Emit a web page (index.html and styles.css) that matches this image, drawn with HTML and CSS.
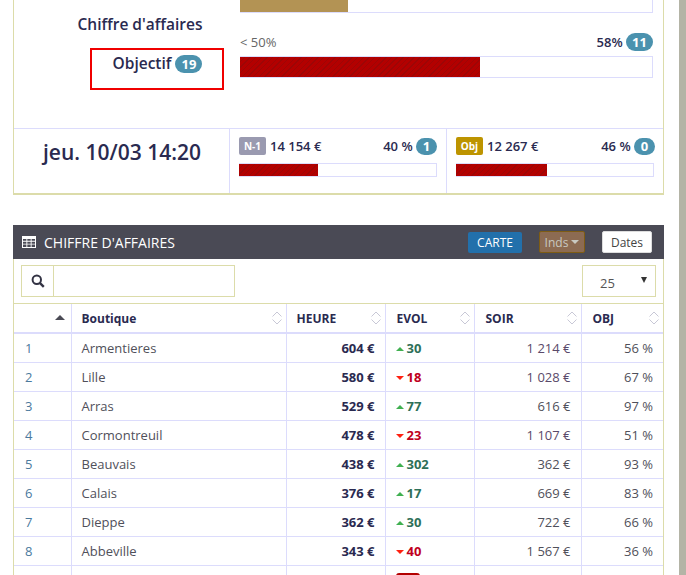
FILE: index.html
```html
<!DOCTYPE html>
<html lang="fr">
<head>
<meta charset="utf-8">
<title>Chiffre d'affaires</title>
<link rel="stylesheet" href="styles.css">
</head>
<body>
<main class="page">
  <section class="panel">
    <div class="top">
      <div class="labels">
        <div class="label-title">Chiffre d'affaires</div>
        <div class="label-box"><span>Objectif</span> <span class="badge">19</span></div>
      </div>
      <div class="bars">
        <div class="track track-first"><div class="fill fill-gold" style="width:108px"></div></div>
        <div class="bar-head"><span class="muted">&lt; 50%</span><span class="strong">58% <span class="badge">11</span></span></div>
        <div class="track track-main"><div class="fill hatch" style="width:240px"></div></div>
      </div>
    </div>
    <div class="bottom">
      <div class="date">jeu. 10/03 14:20</div>
      <div class="cell">
        <div class="cell-head"><span class="tag tag-n1">N-1</span><span class="amount">14 154 €</span><span class="pct">40 % <span class="badge badge-round">1</span></span></div>
        <div class="track track-small"><div class="fill hatch" style="width:79px"></div></div>
      </div>
      <div class="cell cell-last">
        <div class="cell-head"><span class="tag tag-obj">Obj</span><span class="amount">12 267 €</span><span class="pct">46 % <span class="badge badge-round">0</span></span></div>
        <div class="track track-small"><div class="fill hatch" style="width:91px"></div></div>
      </div>
    </div>
  </section>

  <section class="card">
    <header class="card-head">
      <svg class="table-icon" width="14" height="12" viewBox="0 0 14 12"><path fill="#fff" d="M0 0h14v12H0z"/><path fill="#4a4a55" d="M1 3h3.4v1.8H1zM5.3 3h3.4v1.8H5.3zM9.6 3H13v1.8H9.6zM1 5.7h3.4v2H1zM5.3 5.7h3.4v2H5.3zM9.6 5.7H13v2H9.6zM1 8.6h3.4V11H1zM5.3 8.6h3.4V11H5.3zM9.6 8.6H13V11H9.6z"/></svg>
      <span class="card-title">CHIFFRE D'AFFAIRES</span>
      <span class="btn btn-blue">CARTE</span>
      <span class="btn btn-brown">Inds<i class="caret"></i></span>
      <span class="btn btn-white">Dates</span>
    </header>
    <div class="tools">
      <div class="search">
        <span class="search-icon"><svg width="14" height="14" viewBox="0 0 14 14"><circle cx="5.8" cy="5.8" r="4.2" fill="none" stroke="#333344" stroke-width="2"/><path d="M8.8 8.8l4 4" stroke="#333344" stroke-width="2.4" fill="none"/></svg></span>
        <span class="search-input"></span>
      </div>
      <div class="select"><span>25</span><i class="select-arrow"></i></div>
    </div>
    <table class="grid">
      <colgroup><col class="c1"><col class="c2"><col class="c3"><col class="c4"><col class="c5"><col class="c6"></colgroup>
      <thead>
        <tr>
          <th class="sorted"><i class="sort-up"></i></th>
          <th>Boutique<svg class="sort" width="10" height="14" viewBox="0 0 10 14"><path d="M.5 5.5L5 1l4.5 4.5M.5 8.5L5 13l4.5-4.5" fill="none" stroke="#c8c8d6"/></svg></th>
          <th>HEURE<svg class="sort" width="10" height="14" viewBox="0 0 10 14"><path d="M.5 5.5L5 1l4.5 4.5M.5 8.5L5 13l4.5-4.5" fill="none" stroke="#c8c8d6"/></svg></th>
          <th class="th-shift">EVOL<svg class="sort" width="10" height="14" viewBox="0 0 10 14"><path d="M.5 5.5L5 1l4.5 4.5M.5 8.5L5 13l4.5-4.5" fill="none" stroke="#c8c8d6"/></svg></th>
          <th class="th-shift">SOIR<svg class="sort" width="10" height="14" viewBox="0 0 10 14"><path d="M.5 5.5L5 1l4.5 4.5M.5 8.5L5 13l4.5-4.5" fill="none" stroke="#c8c8d6"/></svg></th>
          <th class="th-shift">OBJ<svg class="sort" width="10" height="14" viewBox="0 0 10 14"><path d="M.5 5.5L5 1l4.5 4.5M.5 8.5L5 13l4.5-4.5" fill="none" stroke="#c8c8d6"/></svg></th>
        </tr>
      </thead>
      <tbody>
        <tr><td class="rank">1</td><td>Armentieres</td><td class="num strong">604 €</td><td class="evol up"><i></i>30</td><td class="num soir-big">1 214 €</td><td class="num">56 %</td></tr>
        <tr><td class="rank">2</td><td>Lille</td><td class="num strong">580 €</td><td class="evol down"><i></i>18</td><td class="num soir-big">1 028 €</td><td class="num">67 %</td></tr>
        <tr><td class="rank">3</td><td>Arras</td><td class="num strong">529 €</td><td class="evol up"><i></i>77</td><td class="num">616 €</td><td class="num">97 %</td></tr>
        <tr><td class="rank">4</td><td>Cormontreuil</td><td class="num strong">478 €</td><td class="evol down"><i></i>23</td><td class="num soir-big">1 107 €</td><td class="num">51 %</td></tr>
        <tr><td class="rank">5</td><td>Beauvais</td><td class="num strong">438 €</td><td class="evol up"><i></i>302</td><td class="num">362 €</td><td class="num">93 %</td></tr>
        <tr><td class="rank">6</td><td>Calais</td><td class="num strong">376 €</td><td class="evol up"><i></i>17</td><td class="num">669 €</td><td class="num">83 %</td></tr>
        <tr><td class="rank">7</td><td>Dieppe</td><td class="num strong">362 €</td><td class="evol up"><i></i>30</td><td class="num">722 €</td><td class="num">66 %</td></tr>
        <tr><td class="rank">8</td><td>Abbeville</td><td class="num strong">343 €</td><td class="evol down"><i></i>40</td><td class="num">1 567 €</td><td class="num">36 %</td></tr>
        <tr><td></td><td></td><td></td><td class="evol"><span class="red-chip"></span></td><td></td><td></td></tr>
      </tbody>
    </table>
  </section>
</main>
<div class="scroll-strip"></div>
</body>
</html>
```

FILE: styles.css
```css
* { box-sizing: border-box; }
html, body { margin: 0; height: 575px; overflow: hidden; background: #fff; }
body { display: flex; font-family: "Open Sans", sans-serif; font-size: 13px; color: #2a2a50; }
.page { width: 679px; padding-left: 13px; flex: none; }
.scroll-strip { width: 7px; height: 575px; background: #b4b4a6; flex: none; }

.panel { width: 651px; height: 195px; border: 1px solid #dcdcaa; border-width: 0 1px 2px; }
.top { display: flex; height: 128px; }
.labels { width: 226px; flex: none; display: flex; flex-direction: column; align-items: flex-end; }
.label-title { width: 226px; padding: 14px 0 0 26px; height: 48px; text-align: center; font-size: 15.5px; line-height: 20px; font-weight: 600; color: #2a2a50; }
.label-box { width: 134px; height: 42px; margin-right: 16px; border: 2px solid #f00000; padding: 3px 0 0 1px; text-align: center; font-size: 15.5px; line-height: 20px; font-weight: 600; color: #2a2a50; }
.badge { display: inline-block; min-width: 27px; height: 18px; padding: 0 6px; border-radius: 9px; background: #4b92ae; color: #fff; font-size: 13px; line-height: 18px; font-weight: 700; text-align: center; vertical-align: 0; }
.badge-round { min-width: 21px; width: 21px; height: 17px; padding: 0; line-height: 17px; }
.bars { width: 413px; margin-left: 0; }
.track { border: 1px solid #dcdcfc; background: #fff; }
.fill { height: 100%; }
.fill-gold { background: #b39354; }
.track-first { height: 13px; border-top: 0; border-left: 0; }
.bar-head { display: flex; justify-content: space-between; align-items: center; height: 22px; margin-top: 18px; line-height: 20px; }
.muted { color: #666; font-size: 13px; }
.bar-head .strong { font-weight: 600; }
.track-main { height: 22px; margin-top: 3px; border-left: 0; }
.hatch { background: repeating-linear-gradient(135deg, #b30000 0 3px, #9c0606 3px 4px); }

.bottom { display: flex; height: 65px; border-top: 1px solid #dcdcfc; }
.date { width: 215px; flex: none; padding: 8px 0 0 1px; text-align: center; font-size: 21px; line-height: 30px; font-weight: 600; color: #2a2a50; }
.cell { width: 217px; flex: none; border-left: 1px solid #dcdcfc; padding: 7px 9px 0; }
.cell-last { width: 218px; padding-right: 9px; }
.cell-head { display: flex; align-items: center; height: 20px; line-height: 18px; font-weight: 600; }
.tag { height: 18px; width: 27px; border-radius: 2px; color: #fff; font-size: 10px; line-height: 18px; font-weight: 700; text-align: center; margin-right: 4px; }
.tag-n1 { background: #9a9ab0; }
.tag-obj { background: #bd9400; }
.amount { flex: none; }
.pct { margin-left: auto; }
.track-small { height: 14px; margin-top: 7px; border-left: 0; }
.cell-last .track-small { margin-right: 0; width: 198px; }

.card { width: 651px; margin-top: 30px; border: 1px solid #dcdcaa; border-width: 0 1px; }
.card-head { display: flex; align-items: center; height: 34px; margin: 0 -1px 0 -1px; padding-left: 9px; background: #4a4a55; color: #fff; }
.table-icon { flex: none; }
.card-title { margin-left: 8px; font-size: 14px; flex: 1; }
.btn { display: flex; align-items: center; justify-content: center; height: 21px; border-radius: 2px; font-size: 12px; }
.btn-blue { width: 54px; background: #2270ab; color: #fff; }
.btn-brown { width: 46px; height: 22px; margin-left: 17px; background: #8c6b52; border: 1px solid #7e5c14; color: #c9c9c0; }
.btn-white { width: 50px; height: 22px; margin-left: 17px; margin-right: 12px; background: #fff; border: 1px solid #ddd; color: #444; }
.caret { display: inline-block; margin-left: 3px; border: 4px solid transparent; border-top: 4px solid #c9c9c0; border-bottom: 0; }

.tools { display: flex; justify-content: space-between; height: 45px; padding: 6px 7px 7px; border-bottom: 1px solid #dcdcaa; }
.search { display: flex; width: 214px; height: 32px; border: 1px solid #dcdcaa; }
.search-icon { display: flex; align-items: center; justify-content: center; width: 32px; border-right: 1px solid #dcdcaa; }
.search-input { flex: 1; }
.select { position: relative; width: 74px; height: 32px; border: 1px solid #dcdcaa; padding: 7px 0 0 17px; font-size: 13px; line-height: 20px; color: #555; }
.select-arrow { position: absolute; right: 8px; top: 11px; border: 3px solid transparent; border-top: 6px solid #333; border-bottom: 0; }

.grid { table-layout: fixed; width: 649px; border-collapse: collapse; }
.c1 { width: 57px; } .c2 { width: 215px; } .c3 { width: 99px; } .c4 { width: 89px; } .c5 { width: 107px; } .c6 { width: 82px; }
.grid th { position: relative; height: 29px; padding: 0 0 0 10px; border-right: 1px solid #dcdcfc; border-bottom: 2px solid #dcdcfc; text-align: left; font-size: 12px; font-weight: 700; color: #2a2a50; }
.grid th.th-shift { padding-left: 11px; }
.grid th:last-child, .grid td:last-child { border-right: 0; }
.grid td { height: 29px; padding: 1px 10px 0; border-right: 1px solid #dcdcfc; border-bottom: 1px solid #dcdcfc; font-size: 13px; color: #50505a; white-space: nowrap; overflow: hidden; }
.grid td.rank { color: #4b7a9e; padding-left: 11px; }
.grid td.num { text-align: right; }
.grid td.soir-big { color: #5a4a6a; }
.grid td.strong { color: #2a2a50; font-weight: 700; }
.grid td.evol { font-weight: 700; padding-left: 10px; }
.evol i { display: inline-block; margin-right: 3px; vertical-align: 2px; border: 4px solid transparent; }
.up { color: #2e7058 !important; }
.up i { border-top: 0; border-bottom: 4px solid #40b050; }
.down { color: #c00020 !important; }
.down i { border-bottom: 0; border-top: 4px solid #ff2010; }
.red-chip { display: block; width: 24px; height: 22px; margin-top: 6px; background: #b30000; border-radius: 3px; }
.grid tbody tr:last-child td { vertical-align: top; }
.sort-up { position: absolute; right: 6px; top: 11px; border: 5px solid transparent; border-top: 0; border-bottom: 5px solid #4a4a55; }
.sort { position: absolute; right: 4px; top: 7px; }
```
